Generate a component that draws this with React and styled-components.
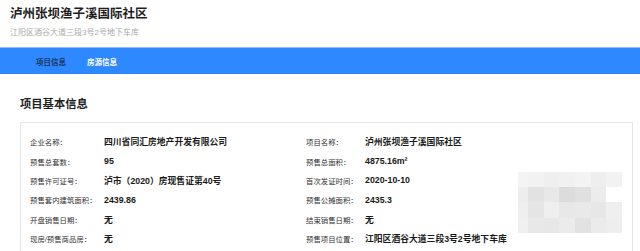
import React from "react";
import styled, { createGlobalStyle } from "styled-components";

const rows = [
  ["企业名称：", "四川省同汇房地产开发有限公司", "项目名称：", "泸州张坝渔子溪国际社区"],
  ["预售总套数：", "95", "预售总面积：", "4875.16m²"],
  ["预售许可证号：", "泸市（2020）房现售证第40号", "首次发证时间：", "2020-10-10"],
  ["预售套内建筑面积：", "2439.86", "预售公摊面积：", "2435.3"],
  ["开盘销售日期：", "无", "结束销售日期：", "无"],
  ["现房/预售商品房：", "无", "预售项目位置：", "江阳区酒谷大道三段3号2号地下车库"],
];

const blur = [
  ["#f4f4f4", "#f2f2f2", "#efefef", "#f1f1f1", "#f3f3f3", "#eeeeee", "#f2f2f2"],
  ["#ededed", "#e2e2e2", "#e8e8e8", "#dcdcdc", "#e0e0e0", "#ececec", "#ffffff"],
  ["#efefef", "#e5e5e5", "#efefef", "#e8e8e8", "#e9e9e9", "#e7e7e7", "#efefef"],
  ["#f0f0f0", "#e8e8e8", "#e7e7e7", "#ebebeb", "#e2e2e2", "#ebebeb", "#eeeeee"],
];

const App = () => {
  return (
    <>
      <GlobalStyle />
      <SHeader>
        <STitle>泸州张坝渔子溪国际社区</STitle>
        <SAddress>江阳区酒谷大道三段3号2号地下车库</SAddress>
      </SHeader>
      <SNav>
        <SNavItem $active>项目信息</SNavItem>
        <SNavItem>房源信息</SNavItem>
      </SNav>
      <SSection>
        <SSectionTitle>项目基本信息</SSectionTitle>
        <SCard>
          <SGrid>
            {rows.map((r, i) => (
              <React.Fragment key={i}>
                <SLabel $col={1} $row={i + 1}>{r[0]}</SLabel>
                <SValue $col={2} $row={i + 1}>{r[1]}</SValue>
                <SLabel $col={3} $row={i + 1}>{r[2]}</SLabel>
                <SValue $col={4} $row={i + 1}>{r[3]}</SValue>
              </React.Fragment>
            ))}
            <SPhoto>
              {blur.flat().map((c, i) => (
                <span key={i} style={{ background: c }} />
              ))}
            </SPhoto>
          </SGrid>
        </SCard>
      </SSection>
    </>
  );
};

export default App;

const GlobalStyle = createGlobalStyle`
  body {
    margin: 0;
    background: #fff;
    font-family: "Liberation Sans", "Noto Sans CJK SC", sans-serif;
    color: #222;
  }
`;

const SHeader = styled.div`
  padding: 6px 10px 0;
`;

const STitle = styled.h1`
  margin: 0;
  font-size: 12.5px;
  line-height: 16px;
  font-weight: bold;
  color: #1e1e1e;
`;

const SAddress = styled.div`
  margin-top: 5px;
  font-size: 8px;
  line-height: 12px;
  color: #aaaaaa;
`;

const SNav = styled.div`
  margin-top: 8px;
  height: 26px;
  background: #2e88ff;
  border-top: 1px solid #8fbcf7;
  display: flex;
  align-items: center;
  gap: 21px;
  padding-left: 36px;
`;

const SNavItem = styled.span`
  font-size: 7.5px;
  font-weight: bold;
  color: ${(p) => (p.$active ? "#1c3a66" : "#ffffff")};
`;

const SSection = styled.div`
  padding: 23px 7px 0 20px;
`;

const SSectionTitle = styled.h2`
  margin: 0 0 11px;
  font-size: 11.3px;
  line-height: 14px;
  font-weight: bold;
  color: #222;
`;

const SCard = styled.div`
  border: 1px solid #e6e6e6;
  padding: 9px 10px 20px 9px;
`;

const SGrid = styled.div`
  display: grid;
  grid-template-columns: 74px 202px 59px 153px 104px;
  grid-auto-rows: 19.4px;
  align-items: center;
`;

const SLabel = styled.span`
  grid-column: ${(p) => p.$col};
  grid-row: ${(p) => p.$row};
  font-size: 7.4px;
  color: #333;
  white-space: nowrap;
`;

const SValue = styled.span`
  grid-column: ${(p) => p.$col};
  grid-row: ${(p) => p.$row};
  font-size: 8.8px;
  font-weight: bold;
  color: #1a1a1a;
  white-space: nowrap;
`;

const SPhoto = styled.div`
  grid-column: 5;
  grid-row: 3 / 7;
  align-self: start;
  margin-top: 1px;
  height: 61px;
  display: grid;
  grid-template-columns: 10px repeat(6, 1fr);
  grid-template-rows: repeat(4, 1fr);
`;
